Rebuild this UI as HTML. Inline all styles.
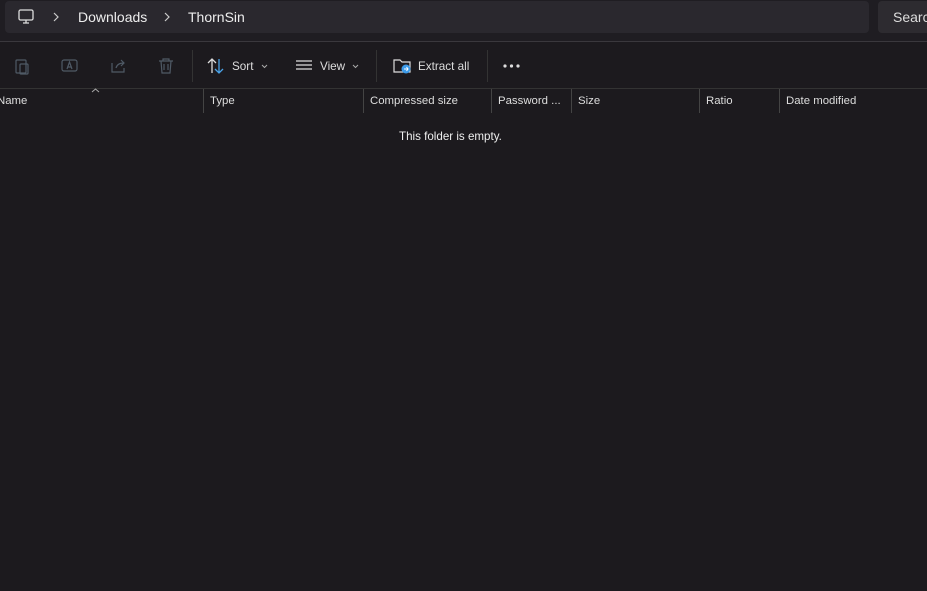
<!DOCTYPE html>
<html><head><style>
body{margin:0;width:927px;height:591px;background:#1c1a1e;font-family:"Liberation Sans",sans-serif;color:#fff;overflow:hidden;position:relative}
.a{position:absolute}
.t{font-size:11.7px;color:#ddd}
.h{font-size:11.4px;color:#ddd;top:95px}
</style></head><body>
<div class="a" style="left:0;top:0;width:927px;height:41px;background:#1f1d22"></div>
<div class="a" style="left:5px;top:1px;width:864px;height:32px;background:#2a282e;border-radius:4px"></div>
<div class="a" style="left:878px;top:1px;width:60px;height:32px;background:#2d2b30;border-radius:4px"></div>
<svg class="a" style="left:17px;top:8px" width="18" height="18" viewBox="0 0 18 18" fill="none" stroke="#ddd" stroke-width="1.3"><rect x="2" y="2" width="14" height="10" rx="1.5"/><path d="M6 15h6M9 12v3"/></svg>
<svg class="a" style="left:52px;top:12px" width="8" height="10" fill="none" stroke="#ccc" stroke-width="1.2"><path d="M2 1l4 4-4 4"/></svg>
<div class="a" style="left:78px;top:9px;font-size:14px;color:#eee">Downloads</div>
<svg class="a" style="left:163px;top:12px" width="8" height="10" fill="none" stroke="#ccc" stroke-width="1.2"><path d="M2 1l4 4-4 4"/></svg>
<div class="a" style="left:188px;top:9px;font-size:14px;color:#eee">ThornSin</div>
<div class="a" style="left:893px;top:9px;font-size:14px;color:#ddd">Search</div>
<div class="a" style="left:0;top:41px;width:927px;height:1px;background:#3a383d"></div>
<svg class="a" style="left:13px;top:57px" width="18" height="18" viewBox="0 0 18 18" fill="none" stroke="#4f5a66" stroke-width="1.2"><rect x="3" y="3" width="10" height="13" rx="1"/><rect x="7" y="7" width="8" height="10" rx="1"/></svg>
<svg class="a" style="left:61px;top:57px" width="18" height="18" viewBox="0 0 18 18" fill="none" stroke="#4f5a66" stroke-width="1.2"><rect x="1" y="3" width="15" height="11" rx="2"/><path d="M6 12l2.5-7 2.5 7M7 10h3"/></svg>
<svg class="a" style="left:109px;top:57px" width="18" height="18" viewBox="0 0 18 18" fill="none" stroke="#4f5a66" stroke-width="1.2"><path d="M3 6v9h12v-4M7 11c1-4 4-5 8-5M12 3l3 3-3 3"/></svg>
<svg class="a" style="left:157px;top:57px" width="18" height="18" viewBox="0 0 18 18" fill="none" stroke="#4f5a66" stroke-width="1.2"><path d="M2 4h14M6 4V2h6v2M4 4l1 12h8l1-12M7 7v6M11 7v6"/></svg>
<div class="a" style="left:192px;top:50px;width:1px;height:32px;background:#333"></div>
<svg class="a" style="left:207px;top:58px" width="18" height="16" viewBox="0 0 18 16" fill="none" stroke-width="1.3"><path d="M5 15V1M1 5l4-4 4 4" stroke="#ddd"/><path d="M12 1v14M8 11l4 4 4-4" stroke="#4aa3e8"/></svg>
<div class="a t" style="left:232px;top:60px">Sort</div>
<svg class="a" style="left:261px;top:64px" width="7" height="5" fill="none" stroke="#aaa"><path d="M1 1l2.5 2.5L6 1"/></svg>
<svg class="a" style="left:295px;top:59px" width="18" height="14" fill="none" stroke="#ddd" stroke-width="1.2"><path d="M1 2h16M1 6h16M1 10h16"/></svg>
<div class="a t" style="left:320px;top:60px">View</div>
<svg class="a" style="left:352px;top:64px" width="7" height="5" fill="none" stroke="#aaa"><path d="M1 1l2.5 2.5L6 1"/></svg>
<div class="a" style="left:376px;top:50px;width:1px;height:32px;background:#333"></div>
<svg class="a" style="left:393px;top:57px" width="20" height="18" viewBox="0 0 20 18" fill="none"><path d="M1 3h6l2 2h8v10H1z" stroke="#ddd" stroke-width="1.2"/><circle cx="13" cy="12" r="4.5" fill="#3d9be9"/><path d="M11 12h4M13.5 10l1.5 2-1.5 2" stroke="#fff"/></svg>
<div class="a t" style="left:418px;top:60px">Extract all</div>
<div class="a" style="left:487px;top:50px;width:1px;height:32px;background:#333"></div>
<svg class="a" style="left:503px;top:64px" width="18" height="4"><circle cx="2" cy="2" r="1.6" fill="#ddd"/><circle cx="8.5" cy="2" r="1.6" fill="#ddd"/><circle cx="15" cy="2" r="1.6" fill="#ddd"/></svg>
<div class="a" style="left:0;top:88px;width:927px;height:1px;background:#333"></div>
<svg class="a" style="left:91px;top:88px" width="9" height="5" fill="none" stroke="#aaa"><path d="M1 4l3.5-3L8 4"/></svg>
<div class="a h" style="left:-3px">Name</div>
<div class="a" style="left:203px;top:89px;width:1px;height:24px;background:#444"></div>
<div class="a h" style="left:210px">Type</div>
<div class="a" style="left:363px;top:89px;width:1px;height:24px;background:#444"></div>
<div class="a h" style="left:370px">Compressed size</div>
<div class="a" style="left:491px;top:89px;width:1px;height:24px;background:#444"></div>
<div class="a h" style="left:498px">Password ...</div>
<div class="a" style="left:571px;top:89px;width:1px;height:24px;background:#444"></div>
<div class="a h" style="left:578px">Size</div>
<div class="a" style="left:699px;top:89px;width:1px;height:24px;background:#444"></div>
<div class="a h" style="left:706px">Ratio</div>
<div class="a" style="left:779px;top:89px;width:1px;height:24px;background:#444"></div>
<div class="a h" style="left:786px">Date modified</div>
<div class="a" style="left:399px;top:130px;font-size:11.6px;color:#eee">This folder is empty.</div>
</body></html>
